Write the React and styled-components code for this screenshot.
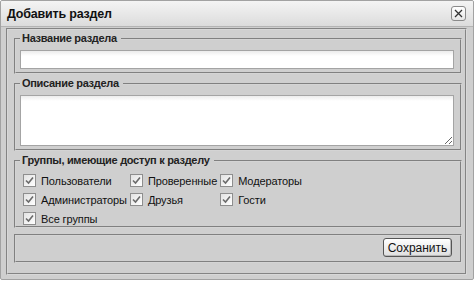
import React from 'react';
import styled, { createGlobalStyle } from 'styled-components';

const Global = createGlobalStyle`
  html, body { margin: 0; padding: 0; background: #ffffff; }
  body { font-family: "Liberation Sans", Arial, sans-serif; }
`;

const Window = styled.div`
  box-sizing: border-box;
  width: 474px;
  height: 280px;
  border: 1px solid #a2a2a2;
  border-radius: 2px;
  background: #cfcfcf;
  display: flex;
  flex-direction: column;
  overflow: hidden;
`;

const TitleBar = styled.div`
  height: 25px;
  flex: none;
  display: flex;
  align-items: center;
  justify-content: space-between;
  padding: 0 6px 0 6px;
  background: linear-gradient(#f4f4f4, #dcdcdc);
  border-bottom: 1px solid #b4b4b4;
`;

const Title = styled.div`
  font-family: "Liberation Sans", Arial, sans-serif;
  font-weight: bold;
  font-size: 12.5px;
  color: #111;
  letter-spacing: -0.2px;
`;

const CloseButton = styled.button`
  box-sizing: border-box;
  width: 15px;
  height: 15px;
  padding: 0;
  border: 1px solid #8a8a8a;
  border-radius: 3px;
  background: linear-gradient(#ffffff, #e6e6e6);
  display: flex;
  align-items: center;
  justify-content: center;
  margin-right: 1px;
`;

const Body = styled.div`
  flex: 1;
  padding: 1px 6px 4px 5px;
  display: flex;
`;

const Panel = styled.div`
  box-sizing: border-box;
  flex: 1;
  border: 2px groove #d8d8d8;
  padding: 2px 3px 8px 6px;
  display: flex;
  flex-direction: column;
  gap: 3px;
`;

const Group = styled.fieldset`
  margin: ${p => p.$mt || '0'} 0 0 0;
  border: 2px groove #d4d4d4;
  padding: ${p => p.$pad || '5px 6px 3px 4px'};
  min-width: 0;
`;

const Legend = styled.legend`
  padding: 0 4px 0 2px;
  font-family: "Liberation Sans", Arial, sans-serif;
  font-weight: bold;
  font-size: 11px;
  line-height: 13px;
  color: #222;
  letter-spacing: -0.3px;
`;

const TextInput = styled.input`
  box-sizing: border-box;
  display: block;
  width: 100%;
  height: 19px;
  border: 1px solid #a4a4a4;
  background: linear-gradient(#ececec, #ffffff 5px);
  outline: none;
`;

const TextArea = styled.textarea`
  box-sizing: border-box;
  display: block;
  width: 100%;
  height: 51px;
  margin-top: 0;
  border: 1px solid #a4a4a4;
  background: linear-gradient(#ececec, #ffffff 5px);
  resize: vertical;
  outline: none;
`;

const Checks = styled.div`
  display: grid;
  grid-template-columns: auto auto auto;
  justify-content: start;
  column-gap: 3px;
  row-gap: 6px;
  padding: 0 0 0 3px;
`;

const CheckItem = styled.label`
  display: flex;
  align-items: center;
  gap: 5px;
  font-family: "Liberation Sans", Arial, sans-serif;
  font-size: 11px;
  color: #111;
  height: 13px;
  white-space: nowrap;
  letter-spacing: -0.1px;
`;

const Box = styled.span`
  box-sizing: border-box;
  width: 13px;
  height: 13px;
  flex: none;
  border: 1px solid #8e8e8e;
  background: linear-gradient(135deg, #e2e2e2, #ffffff);
  display: flex;
  align-items: center;
  justify-content: center;
`;

const Actions = styled.div`
  display: flex;
  justify-content: flex-end;
`;

const SaveButton = styled.button`
  box-sizing: border-box;
  width: 69px;
  height: 19px;
  padding: 0;
  border: 1px solid #555;
  border-radius: 3px;
  background: linear-gradient(#ffffff, #dedede);
  font-family: "Liberation Sans", Arial, sans-serif;
  font-size: 12px;
  color: #111;
  box-shadow: inset -1px -1px 0 #b8b8b8;
`;

function Check({ label }) {
  return (
    <CheckItem>
      <Box>
        <svg width="9" height="9" viewBox="0 0 9 9">
          <path d="M1 4.5 L3.5 7 L8 1.5" fill="none" stroke="#6b6b6b" strokeWidth="1.6" />
        </svg>
      </Box>
      {label}
    </CheckItem>
  );
}

const groups = [
  'Пользователи', 'Проверенные', 'Модераторы',
  'Администраторы', 'Друзья', 'Гости',
  'Все группы',
];

export default function App() {
  return (
    <>
      <Global />
      <Window>
        <TitleBar>
          <Title>Добавить раздел</Title>
          <CloseButton aria-label="close">
            <svg width="9" height="9" viewBox="0 0 9 9">
              <path d="M1 1 L8 8 M8 1 L1 8" stroke="#333" strokeWidth="1.3" />
            </svg>
          </CloseButton>
        </TitleBar>
        <Body>
          <Panel>
            <Group>
              <Legend>Название раздела</Legend>
              <TextInput />
            </Group>
            <Group>
              <Legend>Описание раздела</Legend>
              <TextArea />
            </Group>
            <Group $pad="7px 6px 1px 4px">
              <Legend>Группы, имеющие доступ к разделу</Legend>
              <Checks>
                {groups.map(g => <Check key={g} label={g} />)}
              </Checks>
            </Group>
            <Group $mt="3px" $pad="2px 8px 4px 4px">
              <Actions>
                <SaveButton>Сохранить</SaveButton>
              </Actions>
            </Group>
          </Panel>
        </Body>
      </Window>
    </>
  );
}
